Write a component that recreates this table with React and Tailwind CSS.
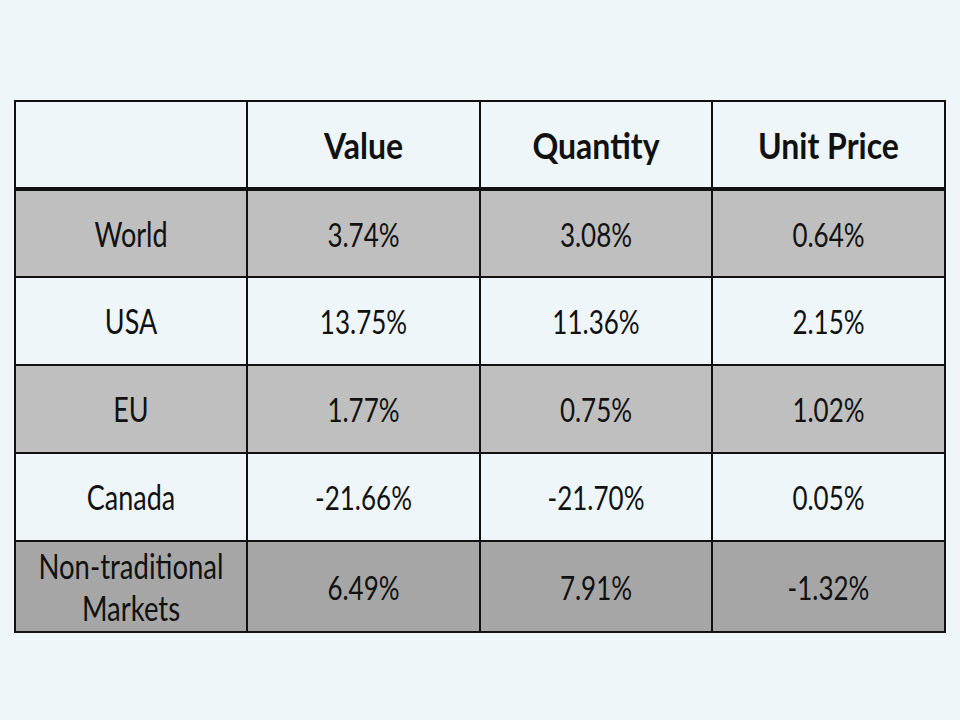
import React from 'react';

const rows = [
  { label: 'World', cells: ['3.74%', '3.08%', '0.64%'], bg: 'bg-[#bfbfbf]' },
  { label: 'USA', cells: ['13.75%', '11.36%', '2.15%'], bg: 'bg-[#eef6f9]' },
  { label: 'EU', cells: ['1.77%', '0.75%', '1.02%'], bg: 'bg-[#bfbfbf]' },
  { label: 'Canada', cells: ['-21.66%', '-21.70%', '0.05%'], bg: 'bg-[#eef6f9]' },
  { label: ['Non-traditional', 'Markets'], cells: ['6.49%', '7.91%', '-1.32%'], bg: 'bg-[#a6a6a6]', tall: true },
];

export default function App() {
  return (
    <div className="w-[960px] h-[720px] bg-[#eef6f9] pt-[100px] pl-[14px] font-['Lato',sans-serif] text-[#111]">
      <table className="border-collapse w-[930px] table-fixed">
        <colgroup>
          <col className="w-[232px]" />
          <col className="w-[233px]" />
          <col className="w-[232px]" />
          <col className="w-[233px]" />
        </colgroup>
        <thead>
          <tr className="h-[88px]">
            {['', 'Value', 'Quantity', 'Unit Price'].map((h, i) => (
              <th key={i} className="border-2 border-b-[4px] border-[#111] text-center align-middle pt-[5px]">
                <span className="inline-block scale-y-[1.12] font-bold text-[32px] leading-[32px]">{h}</span>
              </th>
            ))}
          </tr>
        </thead>
        <tbody>
          {rows.map((r, i) => (
            <tr key={i} className={`${r.tall ? 'h-[91px]' : 'h-[88px]'} ${r.bg}`}>
              <td className="border-2 border-[#111] text-center align-middle">
                {Array.isArray(r.label) ? (
                  <span className="inline-block scale-y-[1.26] text-[27.5px] leading-[33px]">
                    {r.label[0]}
                    <br />
                    {r.label[1]}
                  </span>
                ) : (
                  <span className="inline-block scale-y-[1.26] text-[27px] leading-[32px]">{r.label}</span>
                )}
              </td>
              {r.cells.map((c, j) => (
                <td key={j} className="border-2 border-[#111] text-center align-middle">
                  <span className="inline-block scale-y-[1.28] text-[26px] leading-[32px]">{c}</span>
                </td>
              ))}
            </tr>
          ))}
        </tbody>
      </table>
    </div>
  );
}
